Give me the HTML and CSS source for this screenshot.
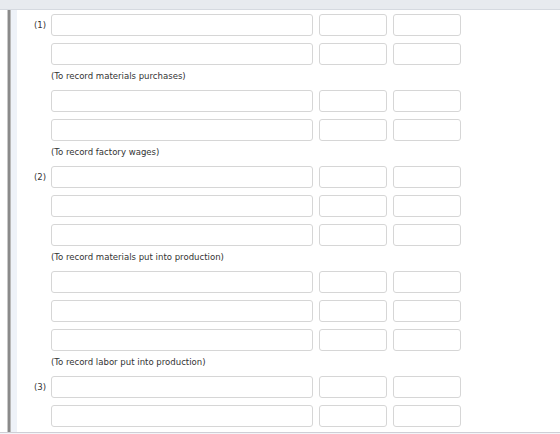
FILE: index.html
```html
<!DOCTYPE html>
<html>
<head>
<meta charset="utf-8">
<link rel="stylesheet" href="styles.css">
</head>
<body>
<div class="topbar"></div>
<div class="main">
  <div class="rail"></div>
  <div class="content">
    <div class="group">
      <div class="label">(1)</div>
      <div class="rows">
        <div class="row"><input class="acct"><input class="amt"><input class="amt"></div>
        <div class="row"><input class="acct"><input class="amt"><input class="amt"></div>
        <div class="note">(To record materials purchases)</div>
        <div class="row"><input class="acct"><input class="amt"><input class="amt"></div>
        <div class="row"><input class="acct"><input class="amt"><input class="amt"></div>
        <div class="note">(To record factory wages)</div>
      </div>
    </div>
    <div class="group">
      <div class="label">(2)</div>
      <div class="rows">
        <div class="row"><input class="acct"><input class="amt"><input class="amt"></div>
        <div class="row"><input class="acct"><input class="amt"><input class="amt"></div>
        <div class="row"><input class="acct"><input class="amt"><input class="amt"></div>
        <div class="note">(To record materials put into production)</div>
        <div class="row"><input class="acct"><input class="amt"><input class="amt"></div>
        <div class="row"><input class="acct"><input class="amt"><input class="amt"></div>
        <div class="row"><input class="acct"><input class="amt"><input class="amt"></div>
        <div class="note">(To record labor put into production)</div>
      </div>
    </div>
    <div class="group">
      <div class="label">(3)</div>
      <div class="rows">
        <div class="row"><input class="acct"><input class="amt"><input class="amt"></div>
        <div class="row"><input class="acct"><input class="amt"><input class="amt"></div>
      </div>
    </div>
  </div>
</div>
<div class="bottombar"></div>
</body>
</html>
```

FILE: styles.css
```css
html, body {
  margin: 0;
  padding: 0;
  background: #ffffff;
}
body {
  width: 560px;
  height: 434px;
  overflow: hidden;
  font-family: "DejaVu Sans Condensed", "Liberation Sans", Arial, sans-serif;
  font-size: 9.5px;
  color: #333333;
}
.topbar {
  height: 9px;
  background: #e7eaef;
  border-bottom: 1px solid #d5d9e0;
}
.main {
  display: flex;
  height: 422px;
  overflow: hidden;
}
.rail {
  flex: none;
  width: 10px;
  margin-left: 7px;
  background: linear-gradient(to right, #c9c9c9 0 1px, #8a8a8a 1px 3px, #b9b9b9 3px 4px, #eef2f8 4px 10px);
}
.content {
  flex: 1;
  padding-top: 4px;
}
.group {
  display: flex;
}
.label {
  width: 34px;
  box-sizing: border-box;
  padding-right: 5px;
  text-align: right;
  height: 22px;
  line-height: 22px;
}
.rows {
  display: flex;
  flex-direction: column;
}
.row {
  display: flex;
  gap: 6px;
  height: 22px;
}
.row + .row {
  margin-top: 7px;
}
input {
  box-sizing: border-box;
  height: 22px;
  margin: 0;
  padding: 0;
  border: 1px solid #d6d6d6;
  border-radius: 3px;
  background: #ffffff;
  outline: none;
}
.acct {
  width: 262px;
}
.amt {
  width: 68px;
}
.note {
  height: 25px;
  line-height: 21px;
}
.bottombar {
  height: 2px;
  border-top: 1px solid #cfcfd6;
  background: #f3f5f9;
}
```
